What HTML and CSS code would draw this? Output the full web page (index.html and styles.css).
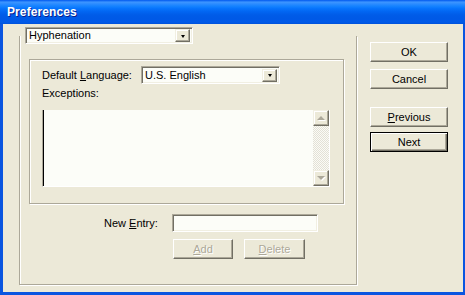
FILE: index.html
```html
<!DOCTYPE html>
<html>
<head>
<meta charset="utf-8">
<link rel="stylesheet" href="styles.css">
</head>
<body>
<div class="window">
  <div class="titlebar"><span class="title">Preferences</span></div>
  <div class="client">
    <div class="frame">
      <div class="combo combo-panel">
        <span class="combo-text">Hyphenation</span>
        <span class="combo-btn"><span class="tri"></span></span>
      </div>
      <div class="group">
        <div class="lang-row">
          <span class="lang-label">Default <u>L</u>anguage:</span>
          <div class="combo combo-lang">
            <span class="combo-text">U.S. English</span>
            <span class="combo-btn"><span class="tri"></span></span>
          </div>
        </div>
        <div class="exc-label">Exceptions:</div>
        <div class="listbox">
          <div class="list-area"></div>
          <div class="vscroll">
            <span class="sbtn"><span class="atri up"></span></span>
            <span class="track"></span>
            <span class="sbtn"><span class="atri down"></span></span>
          </div>
        </div>
      </div>
      <div class="entry-row">
        <span class="entry-label">New <u>E</u>ntry:</span>
        <span class="field"></span>
      </div>
      <div class="entry-btns">
        <span class="btn btn-dis btn-add"><u>A</u>dd</span>
        <span class="btn btn-dis btn-del"><u>D</u>elete</span>
      </div>
    </div>
    <div class="side">
      <span class="btn btn-side">OK</span>
      <span class="btn btn-side">Cancel</span>
      <span class="btn btn-side btn-prev"><u>P</u>revious</span>
      <span class="btn btn-side btn-default">Next</span>
    </div>
  </div>
</div>
</body>
</html>
```
FILE: styles.css
```css
* { box-sizing: border-box; }
html, body { margin: 0; padding: 0; }
body {
  width: 465px;
  height: 295px;
  overflow: hidden;
  font-family: "Liberation Sans", Arial, sans-serif;
  font-size: 11px;
  color: #000;
}
.window {
  width: 465px;
  height: 295px;
  background: #0a55e0;
  display: flex;
  flex-direction: column;
}
.titlebar {
  height: 24px;
  flex: none;
  background: linear-gradient(to bottom, #0058ee 0%, #3d95ff 9%, #2a8bff 17%, #1482ff 26%, #0673fc 36%, #0266f2 48%, #005ce8 62%, #0059e6 78%, #005ae9 92%, #0052da 100%);
  display: flex;
  align-items: center;
  padding-left: 7px;
}
.title {
  color: #fff;
  font-weight: bold;
  font-size: 12px;
  text-shadow: 1px 1px 0 #0a1e8c;
  letter-spacing: 0.1px;
}
.client {
  flex: 1;
  margin: 0 2px 3px 3px;
  background: #ece9d8;
  display: flex;
  align-items: flex-start;
  padding: 12px 0 0 16px;
}
.frame {
  width: 338px;
  height: 249px;
  border: 1px solid #aca899;
  border-top: none;
  box-shadow: inset 1px 0 0 #fff, 1px 1px 0 #fff;
  display: flex;
  flex-direction: column;
  align-items: flex-start;
}
.combo {
  display: flex;
  align-items: center;
  background: #fcfdf8;
  border: 1px solid;
  border-color: #aca899 #fff #fff #aca899;
  box-shadow: inset 1px 1px 0 #716f64, inset -1px -1px 0 #f1efe2;
  padding: 2px 2px 2px 3px;
}
.combo-panel {
  width: 168px;
  height: 17px;
  margin: -9px 0 0 5px;
}
.combo-text {
  flex: 1;
  line-height: 13px;
  white-space: nowrap;
}
.combo-btn {
  width: 15px;
  height: 13px;
  background: #ece9d8;
  border: 1px solid;
  border-color: #f1efe2 #716f64 #716f64 #f1efe2;
  box-shadow: inset -1px -1px 0 #aca899, inset 1px 1px 0 #fff;
  display: flex;
  align-items: center;
  justify-content: center;
}
.tri {
  width: 0;
  height: 0;
  border-left: 2.5px solid transparent;
  border-right: 2.5px solid transparent;
  border-top: 3px solid #000;
  margin-top: 1px;
}
.group {
  width: 315px;
  height: 145px;
  margin: 15px 0 0 9px;
  border: 1px solid #aca899;
  box-shadow: inset 1px 1px 0 #fff, 1px 1px 0 #fff;
  padding: 6px 0 0 12px;
}
.lang-row {
  display: flex;
  align-items: center;
}
.lang-label {
  width: 99px;
}
.combo-lang {
  width: 139px;
  height: 18px;
}
.exc-label {
  margin-top: 3px;
  line-height: 13px;
}
.listbox {
  margin-top: 10px;
  width: 288px;
  height: 77px;
  display: flex;
  border-left: 1px solid #aca899;
  border-right: 1px solid #fff;
  border-bottom: 1px solid #fff;
}
.list-area {
  flex: 1;
  background: #fcfdf8;
  border-left: 1px solid #000;
}
.vscroll {
  width: 16px;
  display: flex;
  flex-direction: column;
}
.sbtn {
  height: 16px;
  flex: none;
  background: #ece9d8;
  border: 1px solid;
  border-color: #f1efe2 #716f64 #716f64 #f1efe2;
  box-shadow: inset -1px -1px 0 #aca899, inset 1px 1px 0 #fff;
  display: flex;
  align-items: center;
  justify-content: center;
}
.track {
  flex: 1;
  background-color: #f5f4ee;
  background-image: repeating-conic-gradient(#e3e1d6 0 25%, #fbfbf6 0 50%);
  background-size: 2px 2px;
}
.atri {
  width: 0;
  height: 0;
  border-left: 4px solid transparent;
  border-right: 4px solid transparent;
}
.atri.up { border-bottom: 4px solid #aca899; filter: drop-shadow(1px 1px 0 #fff); }
.atri.down { border-top: 4px solid #aca899; filter: drop-shadow(1px 1px 0 #fff); }
.entry-row {
  margin: 10px 0 0 84px;
  display: flex;
  align-items: center;
}
.entry-label {
  width: 68px;
}
.field {
  width: 146px;
  height: 18px;
  background: #fcfdf8;
  border: 1px solid;
  border-color: #aca899 #fff #fff #aca899;
  box-shadow: inset 1px 1px 0 #716f64, inset -1px -1px 0 #f1efe2;
}
.entry-btns {
  margin: 7px 0 0 153px;
  display: flex;
  gap: 11px;
}
.btn {
  height: 20px;
  display: flex;
  align-items: center;
  justify-content: center;
  background: #ece9d8;
  border: 1px solid;
  border-color: #fff #716f64 #716f64 #fff;
  box-shadow: inset -1px -1px 0 #aca899;
}
.btn u { text-decoration: underline; text-underline-offset: 1px; }
.btn-dis {
  color: #aca899;
  text-shadow: 1px 1px 0 #fff;
}
.btn-add { width: 60px; }
.btn-del { width: 61px; }
.side {
  margin: 6px 0 0 13px;
  display: flex;
  flex-direction: column;
  width: 78px;
}
.btn-side {
  width: 78px;
}
.btn-side + .btn-side { margin-top: 7px; }
.btn-side.btn-prev { margin-top: 18px; }
.btn-side.btn-default {
  margin-top: 5px;
  border: 1px solid #000;
  box-shadow: inset 1px 1px 0 #fff, inset -1px -1px 0 #716f64, inset -2px -2px 0 #aca899;
}
u { text-decoration-thickness: 1px; }
```
